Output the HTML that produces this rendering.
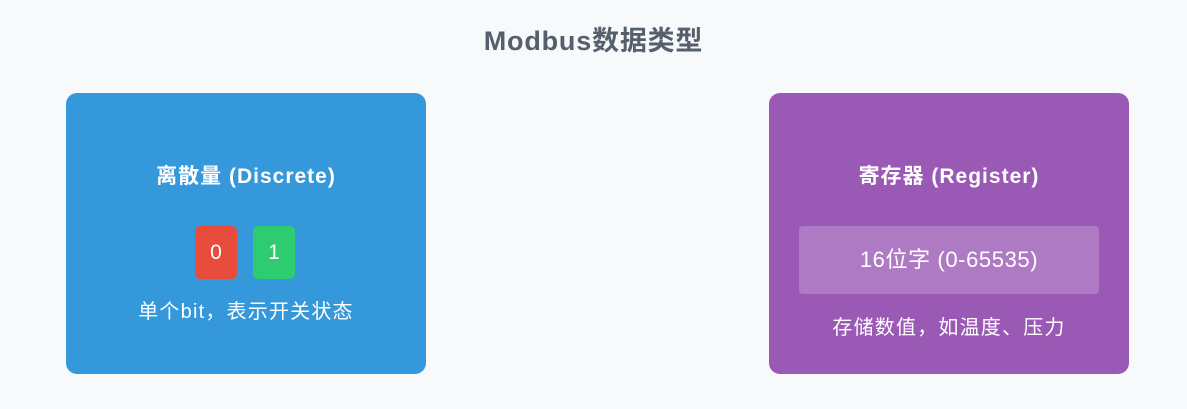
<!DOCTYPE html>
<html><head><meta charset="utf-8"><style>
body{margin:0;width:1187px;height:409px;background:#f8f9fa;font-family:"Liberation Sans","Noto Sans CJK SC",sans-serif;position:relative;overflow:hidden}
.t{position:absolute;top:23px;left:0;width:1187px;text-align:center;font-size:27px;font-weight:bold;color:#56606c;line-height:36px;letter-spacing:0.8px}
.c{position:absolute;top:93px;width:360px;height:281px;border-radius:11px;color:#fff;text-align:center}
.h{position:absolute;top:162px;left:0;width:100%;font-size:21px;font-weight:bold;line-height:30px;letter-spacing:1px}
.b{position:absolute;top:226px;width:42px;height:53px;border-radius:5px;font-size:21px;line-height:53px}
.p{position:absolute;left:0;width:100%;font-size:20px;line-height:26px;letter-spacing:1.2px}
.r{position:absolute;left:30px;top:133px;width:300px;height:68px;background:rgba(255,255,255,.2);border-radius:4px;font-size:22px;line-height:68px;letter-spacing:0.6px}
</style></head><body>
<div class="t">Modbus数据类型</div>
<div class="c" style="left:66px;background:#3598db">
<div class="h" style="top:69px">离散量 (Discrete)</div>
<div class="b" style="left:129px;top:133px;background:#e74c3c">0</div>
<div class="b" style="left:187px;top:133px;background:#2ecc71">1</div>
<div class="p" style="top:206px">单个bit，表示开关状态</div>
</div>
<div class="c" style="left:769px;background:#9b59b6">
<div class="h" style="top:69px">寄存器 (Register)</div>
<div class="r">16位字 (0-65535)</div>
<div class="p" style="top:222px">存储数值，如温度、压力</div>
</div>
</body></html>
